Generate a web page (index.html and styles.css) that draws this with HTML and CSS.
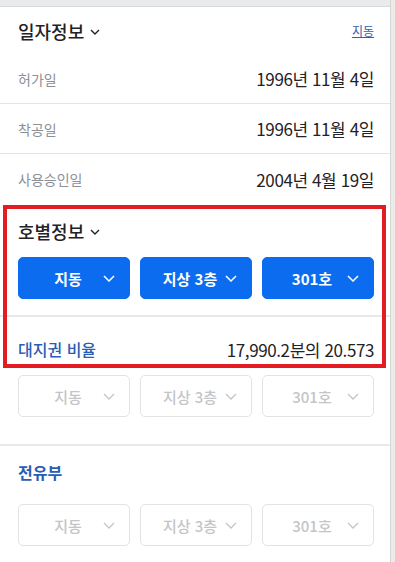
FILE: index.html
```html
<!DOCTYPE html>
<html lang="ko">
<head>
    <meta charset="UTF-8">
    <meta name="viewport" content="width=device-width, initial-scale=1.0">
    <title>건축물 정보</title>
    <link rel="stylesheet" href="styles.css">
</head>
<body>
    <div class="panel">
        <div class="topbar"></div>

        <!-- 일자정보 -->
        <div class="section-head">
            <h2 class="title">일자정보
                <svg class="title-caret" viewBox="0 0 10 6" width="10" height="6"><path d="M1 1l4 4 4-4" fill="none" stroke="#222" stroke-width="1.4"/></svg>
            </h2>
            <a class="head-link" href="#">지동</a>
        </div>
        <div class="info-row">
            <span class="label">허가일</span>
            <span class="value">1996년 11월 4일</span>
        </div>
        <div class="info-row">
            <span class="label">착공일</span>
            <span class="value">1996년 11월 4일</span>
        </div>
        <div class="info-row last">
            <span class="label">사용승인일</span>
            <span class="value">2004년 4월 19일</span>
        </div>

        <!-- 호별정보 -->
        <div class="unit-section">
            <h2 class="title">호별정보
                <svg class="title-caret" viewBox="0 0 10 6" width="10" height="6"><path d="M1 1l4 4 4-4" fill="none" stroke="#222" stroke-width="1.4"/></svg>
            </h2>
            <div class="selects">
                <button class="select active"><span>지동</span><svg viewBox="0 0 12 7" width="12" height="7"><path d="M1 1l5 5 5-5" fill="none" stroke="currentColor" stroke-width="1.5"/></svg></button>
                <button class="select active"><span>지상 3층</span><svg viewBox="0 0 12 7" width="12" height="7"><path d="M1 1l5 5 5-5" fill="none" stroke="currentColor" stroke-width="1.5"/></svg></button>
                <button class="select active"><span>301호</span><svg viewBox="0 0 12 7" width="12" height="7"><path d="M1 1l5 5 5-5" fill="none" stroke="currentColor" stroke-width="1.5"/></svg></button>
            </div>
        </div>

        <div class="ratio-section">
            <div class="ratio-row">
                <span class="blue-label">대지권 비율</span>
                <span class="value">17,990.2분의 20.573</span>
            </div>
            <div class="selects">
                <button class="select"><span>지동</span><svg viewBox="0 0 12 7" width="12" height="7"><path d="M1 1l5 5 5-5" fill="none" stroke="currentColor" stroke-width="1.3"/></svg></button>
                <button class="select"><span>지상 3층</span><svg viewBox="0 0 12 7" width="12" height="7"><path d="M1 1l5 5 5-5" fill="none" stroke="currentColor" stroke-width="1.3"/></svg></button>
                <button class="select"><span>301호</span><svg viewBox="0 0 12 7" width="12" height="7"><path d="M1 1l5 5 5-5" fill="none" stroke="currentColor" stroke-width="1.3"/></svg></button>
            </div>
        </div>

        <!-- 전유부 -->
        <div class="owned-section">
            <div class="blue-title">전유부</div>
            <div class="selects">
                <button class="select"><span>지동</span><svg viewBox="0 0 12 7" width="12" height="7"><path d="M1 1l5 5 5-5" fill="none" stroke="currentColor" stroke-width="1.3"/></svg></button>
                <button class="select"><span>지상 3층</span><svg viewBox="0 0 12 7" width="12" height="7"><path d="M1 1l5 5 5-5" fill="none" stroke="currentColor" stroke-width="1.3"/></svg></button>
                <button class="select"><span>301호</span><svg viewBox="0 0 12 7" width="12" height="7"><path d="M1 1l5 5 5-5" fill="none" stroke="currentColor" stroke-width="1.3"/></svg></button>
            </div>
        </div>

        <!-- annotation box -->
        <div class="highlight"></div>
    </div>
</body>
</html>
```

FILE: styles.css
```css
body {
    margin: 0;
    background-color: #ecebe8;
    font-family: "Noto Sans CJK KR", "Noto Sans", sans-serif;
    color: #222;
}
.panel {
    position: relative;
    width: 390px;
    height: 562px;
    background-color: #fff;
    border-right: 1px solid #d6d6d6;
    overflow: hidden;
}
.topbar {
    height: 6px;
    background-color: #e9eaec;
    border-bottom: 1px solid #d7d9dc;
}
.section-head {
    display: flex;
    align-items: center;
    justify-content: space-between;
    height: 47px;
    padding: 0 16px 0 18px;
}
.title {
    margin: 0;
    font-size: 18px;
    font-weight: 500;
    line-height: 22px;
    color: #1f2226;
    display: flex;
    align-items: center;
}
.title-caret {
    margin-left: 6px;
    margin-top: 2px;
}
.head-link {
    font-size: 12px;
    color: #2f5fb5;
    text-decoration: underline;
}
.info-row {
    display: flex;
    align-items: center;
    justify-content: space-between;
    height: 49px;
    padding: 0 16px 0 18px;
    border-bottom: 1px solid #e3e4e6;
}
.info-row.last {
    border-bottom: none;
    height: 50px;
}
.label {
    font-size: 14px;
    color: #8b9098;
}
.value {
    font-size: 17px;
    font-weight: 400;
    letter-spacing: -0.4px;
    color: #1f2226;
}
.unit-section {
    padding: 16px 16px 16px 18px;
    border-bottom: 2px solid #e8e9eb;
}
.selects {
    display: grid;
    grid-template-columns: repeat(3, 1fr);
    gap: 10px;
}
.unit-section .selects {
    margin-top: 15px;
}
.select {
    display: flex;
    align-items: center;
    height: 42px;
    padding: 0 14px;
    border: 1px solid #e2e3e5;
    border-radius: 5px;
    background-color: #fff;
    color: #c3c5c8;
    font-family: inherit;
    font-size: 15px;
    font-weight: 500;
    cursor: pointer;
}
.select span {
    flex: 1;
    text-align: center;
    white-space: nowrap;
}
.select svg {
    flex: none;
}
.select.active {
    background-color: #0b6cf0;
    border-color: #0b6cf0;
    color: #fff;
    font-weight: 700;
}
.ratio-section {
    padding: 22px 16px 27px 18px;
    border-bottom: 2px solid #e8e9eb;
}
.ratio-row {
    display: flex;
    align-items: center;
    justify-content: space-between;
    height: 20px;
    margin-bottom: 16px;
}
.blue-label {
    font-size: 16px;
    font-weight: 500;
    color: #2a5db5;
}
.owned-section {
    padding: 16px 16px 0 18px;
}
.blue-title {
    font-size: 16px;
    font-weight: 700;
    line-height: 20px;
    color: #2a5db5;
    margin-bottom: 22px;
}
.highlight {
    position: absolute;
    left: 3px;
    top: 205px;
    width: 375px;
    height: 155px;
    border: 4px solid #e31b23;
    pointer-events: none;
}
```
